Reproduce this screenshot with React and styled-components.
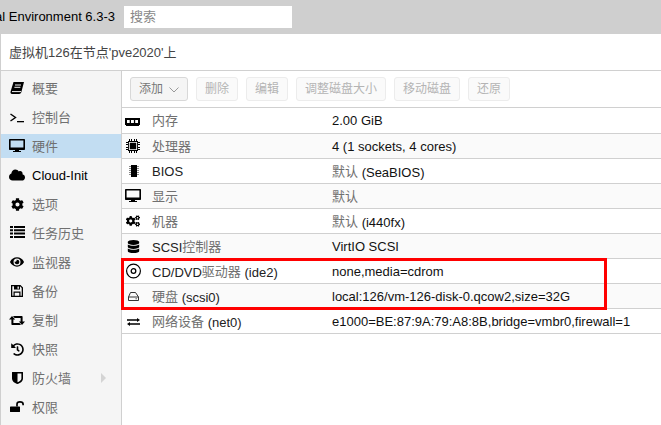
import React from 'react'
import styled, { createGlobalStyle } from 'styled-components'
import { FaCloud, FaCog, FaEye, FaHistory, FaCogs, FaDatabase } from 'react-icons/fa'

const GlobalStyle = createGlobalStyle`
  html, body {
    margin: 0;
    padding: 0;
    background: #fff;
  }
  body {
    font-family: "Liberation Sans", "Noto Sans CJK SC", Arial, sans-serif;
    font-size: 13px;
    color: #000;
  }
`

const Page = styled.div`
  width: 661px;
  height: 425px;
  overflow: hidden;
  display: flex;
  flex-direction: column;
`

const Header = styled.header`
  height: 34px;
  flex: none;
  background: #cfcfcf;
  display: flex;
  align-items: center;
  gap: 9px;
  box-sizing: border-box;
  padding-bottom: 1px;
`

const Brand = styled.div`
  width: 115px;
  white-space: nowrap;
  overflow: hidden;
  display: flex;
  justify-content: flex-end;
`

const Search = styled.div`
  width: 168px;
  height: 22px;
  background: #fff;
  color: #888;
  box-sizing: border-box;
  padding-left: 6px;
  line-height: 22px;
`

const Main = styled.div`
  flex: 1;
  display: flex;
  flex-direction: column;
  border-left: 1px solid #cfcfcf;
  min-height: 0;
`

const Title = styled.div`
  height: 36px;
  flex: none;
  box-sizing: content-box;
  border-bottom: 1px solid #d0d0d0;
  display: flex;
  align-items: center;
  padding-left: 8px;
  color: #444;
  span {
    transform: translateY(-1px);
  }
`

const Body = styled.div`
  flex: 1;
  display: flex;
  min-height: 0;
`

const Sidebar = styled.nav`
  width: 120px;
  flex: none;
  background: #f5f5f5;
  border-right: 1px solid #d0d0d0;
  padding-top: 5px;
  display: flex;
  flex-direction: column;
  gap: 5px;
`

const NavItem = styled.div`
  height: 24px;
  flex: none;
  display: flex;
  align-items: center;
  background: ${(p) => (p.$active ? '#c2ddf2' : 'transparent')};
`

const NavIcon = styled.span`
  width: 32px;
  margin-right: -1px;
  flex: none;
  display: flex;
  justify-content: center;
  color: #000;
  font-size: ${(p) => p.$size || 14}px;
`

const NavLabel = styled.span`
  color: ${(p) => (p.$latin ? '#000' : '#707070')};
  transform: translateY(${(p) => (p.$latin ? 0 : -1)}px);
`

const Arrow = styled.span`
  margin-left: auto;
  margin-right: 15px;
  width: 0;
  height: 0;
  border-left: 5px solid #d4d4d4;
  border-top: 5px solid transparent;
  border-bottom: 5px solid transparent;
`

const Content = styled.section`
  flex: 1;
  min-width: 0;
  display: flex;
  flex-direction: column;
  position: relative;
`

const Toolbar = styled.div`
  height: 36px;
  flex: none;
  box-sizing: content-box;
  border-bottom: 1px solid #d0d0d0;
  display: flex;
  align-items: center;
  gap: 8px;
  padding-left: 8px;
`

const ToolButton = styled.div`
  height: 24px;
  box-sizing: border-box;
  border: 1px solid ${(p) => (p.$disabled ? '#ececec' : '#d8d8d8')};
  border-radius: 3px;
  background: ${(p) => (p.$disabled ? '#fafafa' : '#f5f5f5')};
  color: ${(p) => (p.$disabled ? '#b4b4b4' : '#777')};
  font-size: 12px;
  display: flex;
  align-items: center;
  padding: 0 8px 4px;
  gap: 6px;
`

const Chevron = styled.svg`
  width: 10px;
  height: 6px;
  fill: none;
  stroke: #999;
  stroke-width: 1;
  margin-top: 5px;
`

const Row = styled.div`
  height: ${(p) => (p.$first ? 25 : 24)}px;
  flex: none;
  border-bottom: 1px solid #d0d0d0;
  display: grid;
  grid-template-columns: 210px 1fr;
  align-items: center;
  background: ${(p) => (p.$alt ? '#fafafa' : '#fff')};
`

const NameCell = styled.div`
  display: flex;
  align-items: center;
  color: #222;
  white-space: nowrap;
`

const RowIcon = styled.span`
  width: 22px;
  margin-right: 8px;
  flex: none;
  display: flex;
  justify-content: center;
  color: #000;
  font-size: ${(p) => p.$size || 14}px;
`

const Soft = styled.span`
  display: inline-block;
  color: #707070;
  transform: translateY(-1px);
`

const ValueCell = styled.div`
  white-space: nowrap;
  color: #111;
`

// red annotation drawn on top of the screenshot
const Highlight = styled.div`
  position: absolute;
  left: -1px;
  top: 187px;
  width: 486px;
  height: 52px;
  box-sizing: border-box;
  border: 3px solid #f00;
  pointer-events: none;
`

const Glyph = ({ children }) => (
  <svg width="16" height="14" viewBox="0 0 16 14" style={{ display: 'block', overflow: 'visible' }}>
    {children}
  </svg>
)

const BookIcon = () => (
  <Glyph>
    <path fill="#000" d="M4.5 1H15L12.5 10.5C12.2 12 11.5 13 10 13H3C1.8 13 1.2 11.8 1.6 10.5z" />
    <path fill="none" stroke="#f5f5f5" strokeWidth="1" d="M3 10.6H12M6 4H12M5.4 6.3H11.4" />
  </Glyph>
)

const TerminalIcon = () => (
  <Glyph>
    <path fill="none" stroke="#000" strokeWidth="1.4" d="M1.5 4 6.5 7.5 1.5 11" />
    <path fill="#000" d="M8 11h7v1.3H8z" />
  </Glyph>
)

const DesktopIcon = () => (
  <Glyph>
    <path fill="#000" fillRule="evenodd" d="M1 0H15C15.6 0 16 .4 16 1V10C16 10.6 15.6 11 15 11H10V12H12V13H4V12H6V11H1C.4 11 0 10.6 0 10V1C0 .4 .4 0 1 0zM1.6 1.6V8.6H14.4V1.6z" />
  </Glyph>
)

const ListIcon = () => (
  <Glyph>
    <path fill="#000" d="M1 0h3v2H1zM5 0h11v2H5zM1 3.3h3v2H1zM5 3.3h11v2H5zM1 6.6h3v2H1zM5 6.6h11v2H5zM1 10h3v2H1zM5 10h11v2H5z" />
  </Glyph>
)

const SaveIcon = () => (
  <Glyph>
    <path fill="#000" fillRule="evenodd" d="M2 1H11.5L14 3.5V13H2zM3.3 2.3V11.7H4.5V7.5H11.5V11.7H12.7V4L11 2.3V5.5H5V2.3zM5.7 8.7V11.7H10.3V8.7zM8.5 2.6H9.9V4.8H8.5z" />
  </Glyph>
)

const RetweetIcon = () => (
  <Glyph>
    <path fill="#000" d="M3 3 6.2 6.4H4.4V10H10.5L12 12H3.4C2.8 12 2.4 11.6 2.4 11V6.4H0zM13 12 9.8 8.6H11.6V5H5.5L4 3H12.6C13.2 3 13.6 3.4 13.6 4V8.6H16z" />
  </Glyph>
)

const ShieldIcon = () => (
  <Glyph>
    <path fill="#000" fillRule="evenodd" d="M3.5 1H13.5C14 1 14 1.4 14 1.6V7.5C14 10.5 10.7 12.4 8.5 13 6.3 12.4 3 10.5 3 7.5V1.6C3 1.4 3 1 3.5 1zM8.5 2.6V11.3C10.2 10.6 12.4 9.4 12.4 7.5V2.6z" />
  </Glyph>
)

const UnlockIcon = () => (
  <Glyph>
    <path fill="#000" d="M1.6 6.5H10.4C10.7 6.5 11 6.8 11 7.1V11.4C11 11.7 10.7 12 10.4 12H1.6C1.3 12 1 11.7 1 11.4V7.1C1 6.8 1.3 6.5 1.6 6.5z" />
    <path fill="none" stroke="#000" strokeWidth="1.7" d="M8 6.6V4.2C8 2.6 9.1 1.9 10.9 1.9 12.7 1.9 14.1 2.7 14.1 4.2V5.2" />
  </Glyph>
)

const MemoryIcon = () => (
  <Glyph>
    <path fill="#000" fillRule="evenodd" d="M0 4H15V11H14V12H1V11H0zM2 6V9H4.7V6zM6 6V9H8.9V6zM10.2 6V9H13V6z" />
  </Glyph>
)

const CpuIcon = () => (
  <Glyph>
    <path fill="#000" fillRule="evenodd" d="M3 2H13V12H3zM3.9 2.9V11.1H12.1V2.9z" />
    <path fill="#000" d="M4.8 3.8H11.2V10.2H4.8zM1 3h2v1H1zM1 5h2v1H1zM1 8h2v1H1zM1 10h2v1H1zM13 3h2v1h-2zM13 5h2v1h-2zM13 8h2v1h-2zM13 10h2v1h-2zM4 0h1v2H4zM6 0h1v2H6zM9 0h1v2H9zM11 0h1v2h-1zM4 12h1v2H4zM6 12h1v2H6zM9 12h1v2H9zM11 12h1v2h-1z" />
  </Glyph>
)

const BiosIcon = () => (
  <Glyph>
    <path fill="#888" d="M4 2h10v1H4zM4 4h10v1H4zM4 6h10v1H4zM4 8h10v1H4zM4 10h10v1H4z" />
    <path fill="#000" d="M6 1H12V13H6z" />
  </Glyph>
)

const DiscIcon = () => (
  <Glyph>
    <circle cx="8.5" cy="7" r="6.9" fill="none" stroke="#000" strokeWidth="1.2" />
    <circle cx="8.5" cy="7" r="2.3" fill="none" stroke="#000" strokeWidth="1.3" />
  </Glyph>
)

const HddIcon = () => (
  <Glyph>
    <path fill="none" stroke="#333" strokeWidth="1" d="M5.5 3.5H10.5L13.5 8V11.5H3.5V8zM3.5 8H13.5" />
    <path fill="#555" d="M10.5 9.3h1.4v1h-1.4z" />
  </Glyph>
)

const ExchangeIcon = () => (
  <Glyph>
    <path fill="#000" d="M2 5.3H12V4L15 6 12 8V6.7H2zM15 9.3H5V8L2 10 5 12V10.7H15z" />
  </Glyph>
)

const navItems = [
  { icon: <BookIcon />, label: '概要' },
  { icon: <TerminalIcon />, label: '控制台' },
  { icon: <DesktopIcon />, label: '硬件', active: true },
  { icon: <FaCloud />, size: 16, label: 'Cloud-Init', latin: true },
  { icon: <FaCog />, size: 13, label: '选项' },
  { icon: <ListIcon />, label: '任务历史' },
  { icon: <FaEye />, label: '监视器' },
  { icon: <SaveIcon />, label: '备份' },
  { icon: <RetweetIcon />, label: '复制' },
  { icon: <FaHistory />, size: 13, label: '快照' },
  { icon: <ShieldIcon />, label: '防火墙', arrow: true },
  { icon: <UnlockIcon />, label: '权限' },
]

const tools = ['删除', '编辑', '调整磁盘大小', '移动磁盘', '还原']

const rows = [
  { icon: <MemoryIcon />, name: <Soft>内存</Soft>, value: '2.00 GiB' },
  { icon: <CpuIcon />, name: <Soft>处理器</Soft>, value: '4 (1 sockets, 4 cores)' },
  { icon: <BiosIcon />, name: 'BIOS', value: <><Soft>默认</Soft> (SeaBIOS)</> },
  { icon: <DesktopIcon />, name: <Soft>显示</Soft>, value: <Soft>默认</Soft> },
  { icon: <FaCogs />, name: <Soft>机器</Soft>, value: <><Soft>默认</Soft> (i440fx)</> },
  { icon: <FaDatabase />, size: 13, name: <>SCSI<Soft>控制器</Soft></>, value: 'VirtIO SCSI' },
  { icon: <DiscIcon />, name: <>CD/DVD<Soft>驱动器</Soft> (ide2)</>, value: 'none,media=cdrom' },
  { icon: <HddIcon />, name: <><Soft>硬盘</Soft> (scsi0)</>, value: 'local:126/vm-126-disk-0.qcow2,size=32G' },
  { icon: <ExchangeIcon />, name: <><Soft>网络设备</Soft> (net0)</>, value: 'e1000=BE:87:9A:79:A8:8B,bridge=vmbr0,firewall=1' },
]

export default function App() {
  return (
    <Page>
      <GlobalStyle />
      <Header>
        <Brand>Proxmox Virtual Environment 6.3-3</Brand>
        <Search>搜索</Search>
      </Header>
      <Main>
        <Title><span>虚拟机126在节点'pve2020'上</span></Title>
        <Body>
          <Sidebar>
            {navItems.map((item) => (
              <NavItem key={item.label} $active={item.active}>
                <NavIcon $size={item.size}>{item.icon}</NavIcon>
                <NavLabel $latin={item.latin}>{item.label}</NavLabel>
                {item.arrow && <Arrow />}
              </NavItem>
            ))}
          </Sidebar>
          <Content>
            <Toolbar>
              <ToolButton>
                添加
                <Chevron viewBox="0 0 10 6"><path d="M0.5 0.5 5 5 9.5 0.5" /></Chevron>
              </ToolButton>
              {tools.map((tool) => (
                <ToolButton key={tool} $disabled>{tool}</ToolButton>
              ))}
            </Toolbar>
            {rows.map((row, i) => (
              <Row key={i} $alt={i % 2 === 1} $first={i === 0}>
                <NameCell>
                  <RowIcon $size={row.size}>{row.icon}</RowIcon>
                  <span>{row.name}</span>
                </NameCell>
                <ValueCell>{row.value}</ValueCell>
              </Row>
            ))}
            <Highlight />
          </Content>
        </Body>
      </Main>
    </Page>
  )
}
